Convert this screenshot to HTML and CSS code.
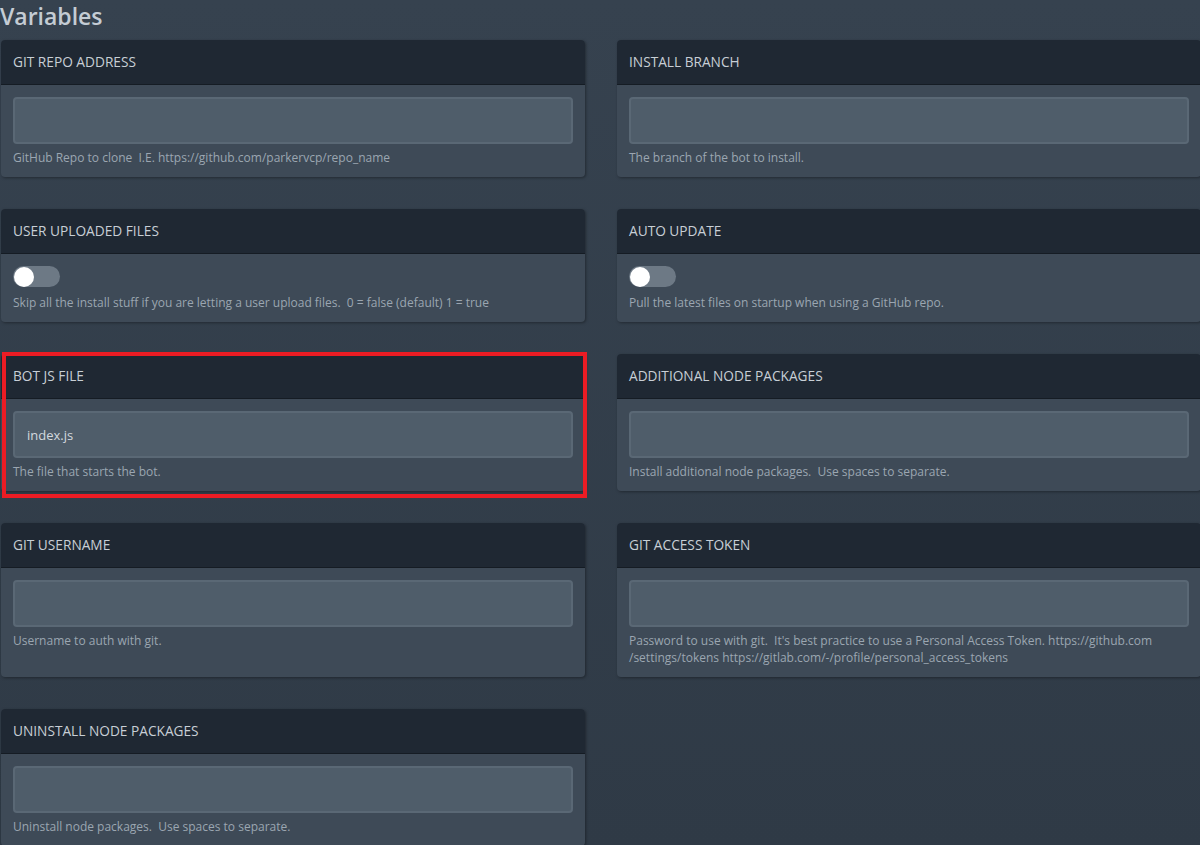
FILE: index.html
```html
<!DOCTYPE html>
<html>
<head>
<meta charset="utf-8">
<link rel="stylesheet" href="styles.css">
</head>
<body>
<div class="page">
  <h1 class="title">Variables</h1>
  <div class="grid">
    <div class="card">
      <div class="card-head">GIT REPO ADDRESS</div>
      <div class="card-body">
        <div class="input"></div>
        <div class="help">GitHub Repo to clone&nbsp; I.E. https://github.com/parkervcp/repo_name</div>
      </div>
    </div>
    <div class="card">
      <div class="card-head">INSTALL BRANCH</div>
      <div class="card-body">
        <div class="input"></div>
        <div class="help">The branch of the bot to install.</div>
      </div>
    </div>
    <div class="card">
      <div class="card-head">USER UPLOADED FILES</div>
      <div class="card-body">
        <div class="toggle"><span class="knob"></span></div>
        <div class="help help-toggle">Skip all the install stuff if you are letting a user upload files.&nbsp; 0 = false (default) 1 = true</div>
      </div>
    </div>
    <div class="card">
      <div class="card-head">AUTO UPDATE</div>
      <div class="card-body">
        <div class="toggle"><span class="knob"></span></div>
        <div class="help help-toggle">Pull the latest files on startup when using a GitHub repo.</div>
      </div>
    </div>
    <div class="card card-marked">
      <div class="card-head">BOT JS FILE</div>
      <div class="card-body">
        <div class="input"><span class="value">index.js</span></div>
        <div class="help">The file that starts the bot.</div>
      </div>
    </div>
    <div class="card">
      <div class="card-head">ADDITIONAL NODE PACKAGES</div>
      <div class="card-body">
        <div class="input"></div>
        <div class="help">Install additional node packages.&nbsp; Use spaces to separate.</div>
      </div>
    </div>
    <div class="card">
      <div class="card-head">GIT USERNAME</div>
      <div class="card-body">
        <div class="input"></div>
        <div class="help">Username to auth with git.</div>
      </div>
    </div>
    <div class="card">
      <div class="card-head">GIT ACCESS TOKEN</div>
      <div class="card-body">
        <div class="input"></div>
        <div class="help">Password to use with git.&nbsp; It's best practice to use a Personal Access Token. https://github.com<br>/settings/tokens https://gitlab.com/-/profile/personal_access_tokens</div>
      </div>
    </div>
    <div class="card">
      <div class="card-head">UNINSTALL NODE PACKAGES</div>
      <div class="card-body">
        <div class="input"></div>
        <div class="help">Uninstall node packages.&nbsp; Use spaces to separate.</div>
      </div>
    </div>
  </div>
</div>
</body>
</html>
```
FILE: styles.css
```css
html, body {
  margin: 0;
  padding: 0;
}
body {
  background: linear-gradient(#36424f, #2f3a46);
  min-height: 845px;
  overflow: hidden;
  font-family: "Open Sans", "Noto Sans", sans-serif;
}
.page {
  padding-left: 1px;
}
.title {
  margin: 0 0 8px -1px;
  padding-top: 1px;
  height: 31px;
  line-height: 30px;
  font-size: 23px;
  font-weight: 600;
  color: #c4ccd4;
}
.grid {
  display: grid;
  grid-template-columns: 584px 584px;
  column-gap: 32px;
  row-gap: 32px;
  width: 1200px;
}
.card {
  position: relative;
  border-radius: 4px;
  background: #3e4a57;
  box-shadow: 1px 1px 3px rgba(0, 0, 0, 0.35);
  display: flex;
  flex-direction: column;
}
.card-head {
  height: 44px;
  line-height: 44px;
  padding: 0 12px;
  background: #1f2833;
  border-bottom: 1px solid #151c24;
  border-radius: 4px 4px 0 0;
  color: #c8cfd6;
  font-size: 13.7px;
}
.card-body {
  padding: 12px 12px 11px 12px;
  flex: 1;
}
.input {
  box-sizing: border-box;
  height: 47px;
  background: #4f5d6a;
  border: 2px solid #5a6875;
  border-radius: 4px;
  display: flex;
  align-items: center;
  padding-left: 12px;
}
.value {
  color: #d3d9df;
  font-size: 13px;
}
.help {
  margin-top: 5px;
  font-size: 12px;
  line-height: 17px;
  color: #9ba6b1;
}
.help-toggle {
  margin-top: 7px;
}
.toggle {
  width: 47px;
  height: 21px;
  border-radius: 11px;
  background: #6d7985;
  display: flex;
  align-items: center;
  padding-left: 1px;
  box-sizing: border-box;
}
.knob {
  width: 20px;
  height: 20px;
  border-radius: 50%;
  background: #ffffff;
}
.card-marked::after {
  content: "";
  position: absolute;
  top: -2px;
  left: 1px;
  right: -2px;
  bottom: -7px;
  border: 4px solid #ec1c24;
  pointer-events: none;
}
```
